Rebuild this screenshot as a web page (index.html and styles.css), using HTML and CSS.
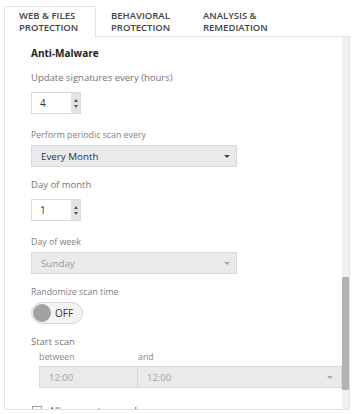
FILE: index.html
```html
<!DOCTYPE html>
<html lang="en">
<head>
    <meta charset="UTF-8">
    <meta name="viewport" content="width=device-width, initial-scale=1.0">
    <title>Policy - Anti-Malware</title>
    <link rel="stylesheet" href="styles.css">
</head>
<body>
    <div class="tabs">
        <div class="tab active">Web &amp; Files<br>Protection</div>
        <div class="tab">Behavioral<br>Protection</div>
        <div class="tab">Analysis &amp;<br>Remediation</div>
    </div>

    <div class="panel">
        <div class="content">
            <h3 class="section-title">Anti-Malware</h3>

            <div class="field number-field">
                <div class="field-label big">Update signatures every (hours)</div>
                <div class="spin">
                    <span class="spin-value">4</span>
                    <span class="spin-arrows"><i class="arrow-up"></i><i class="arrow-down"></i></span>
                </div>
            </div>

            <div class="field">
                <div class="field-label">Perform periodic scan every</div>
                <div class="select">
                    <span>Every Month</span>
                    <i class="caret"></i>
                </div>
            </div>

            <div class="field number-field">
                <div class="field-label big">Day of month</div>
                <div class="spin">
                    <span class="spin-value">1</span>
                    <span class="spin-arrows"><i class="arrow-up"></i><i class="arrow-down"></i></span>
                </div>
            </div>

            <div class="field">
                <div class="field-label">Day of week</div>
                <div class="select disabled">
                    <span>Sunday</span>
                    <i class="caret"></i>
                </div>
            </div>

            <div class="field">
                <div class="field-label">Randomize scan time</div>
                <div class="toggle">
                    <span class="knob"></span>
                    <span class="toggle-text">OFF</span>
                </div>
            </div>

            <div class="field">
                <div class="field-label big">Start scan</div>
                <div class="time-range">
                    <div class="sub-label">between</div>
                    <div class="sub-label">and</div>
                    <div class="time-box">12:00</div>
                    <div class="time-box last">
                        <span>12:00</span>
                        <i class="caret"></i>
                    </div>
                </div>
            </div>

            <div class="check-row">
                <span class="checkbox"></span>
                <span>Allow user to cancel scan</span>
            </div>
        </div>

        <div class="scrollbar">
            <div class="thumb"></div>
        </div>
    </div>
</body>
</html>
```

FILE: styles.css
```css
body {
    font-family: 'Open Sans', 'Noto Sans', sans-serif;
    margin: 0;
    padding: 6px 3px 0 4px;
    background-color: #ffffff;
    color: #333;
}

.tabs {
    display: flex;
    height: 31px;
    margin-bottom: -1px;
    position: relative;
    z-index: 1;
}

.tab {
    box-sizing: border-box;
    width: 92px;
    height: 32px;
    padding: 3px 0 0 14px;
    border: 1px solid transparent;
    border-bottom: none;
    font-size: 9.5px;
    line-height: 12px;
    font-weight: 600;
    text-transform: uppercase;
    color: #444;
}

.tab.active {
    background: #ffffff;
    border-color: #e2e2e2;
}

.panel {
    display: flex;
    height: 374px;
    box-sizing: border-box;
    border: 1px solid #e2e2e2;
}

.content {
    flex: 1;
    overflow: hidden;
    padding: 9px 0 0 26px;
}

.section-title {
    margin: 0 0 11px;
    font-size: 10px;
    line-height: 14px;
    font-weight: 700;
    color: #222;
}

.field {
    margin-bottom: 11px;
}

.field.number-field {
    margin-bottom: 14px;
}

.field-label {
    font-size: 8.8px;
    line-height: 14px;
    color: #808080;
    margin-bottom: 3px;
}

.field-label.big {
    font-size: 9.5px;
    color: #747474;
    margin-bottom: 1px;
}

.spin {
    display: flex;
    box-sizing: border-box;
    width: 50px;
    height: 22px;
    margin-top: 7px;
    border: 1px solid #dadada;
    background: #fff;
}

.spin-value {
    flex: 1;
    padding-left: 8px;
    font-size: 10px;
    line-height: 20px;
    color: #333;
}

.spin-arrows {
    width: 9px;
    background: #e2e3e4;
    display: flex;
    flex-direction: column;
    align-items: center;
    justify-content: center;
    gap: 3px;
}

.arrow-up,
.arrow-down {
    width: 0;
    height: 0;
    border-left: 2.5px solid transparent;
    border-right: 2.5px solid transparent;
}

.arrow-up {
    border-bottom: 3px solid #555;
}

.arrow-down {
    border-top: 3px solid #555;
}

.select {
    display: flex;
    align-items: center;
    justify-content: space-between;
    box-sizing: border-box;
    width: 206px;
    height: 22px;
    padding: 0 6px 0 9px;
    border: 1px solid #d8d8d8;
    background: #e9eaeb;
    font-size: 9.8px;
    color: #333;
}

.caret {
    width: 0;
    height: 0;
    border-left: 3px solid transparent;
    border-right: 3px solid transparent;
    border-top: 3px solid #444;
}

.select.disabled {
    color: #9a9a9a;
}

.select.disabled .caret {
    border-top-color: #a5a5a5;
}

.toggle {
    display: flex;
    align-items: center;
    gap: 4px;
    box-sizing: border-box;
    width: 52px;
    height: 22px;
    padding-left: 1px;
    border: 1px solid #d6d6d6;
    border-radius: 11px;
    background: #f3f3f3;
}

.knob {
    width: 18px;
    height: 18px;
    border-radius: 50%;
    background: #a2a2a2;
}

.toggle-text {
    font-size: 10px;
    color: #333;
}

.time-range {
    display: grid;
    grid-template-columns: 99px 1fr;
    margin-left: 8px;
}

.sub-label {
    font-size: 8.8px;
    line-height: 14px;
    color: #888;
    margin-bottom: 2px;
}

.time-box {
    display: flex;
    align-items: center;
    justify-content: space-between;
    box-sizing: border-box;
    height: 22px;
    padding: 0 8px 0 9px;
    border: 1px solid #d8d8d8;
    background: #e9eaeb;
    font-size: 9.5px;
    color: #a5a5a5;
}

.time-box.last {
    border-left: none;
}

.time-box .caret {
    border-top-color: #aaa;
}

.check-row {
    display: flex;
    align-items: center;
    gap: 7px;
    margin: 16px 0 0 1px;
    font-size: 9.5px;
    color: #444;
}

.checkbox {
    width: 10px;
    height: 10px;
    box-sizing: border-box;
    border: 1px solid #9a9a9a;
    background: #fff;
}

.scrollbar {
    width: 7px;
    background: #f0f0f0;
}

.thumb {
    height: 113px;
    margin-top: 240px;
    background: #b2b2b2;
}
```
